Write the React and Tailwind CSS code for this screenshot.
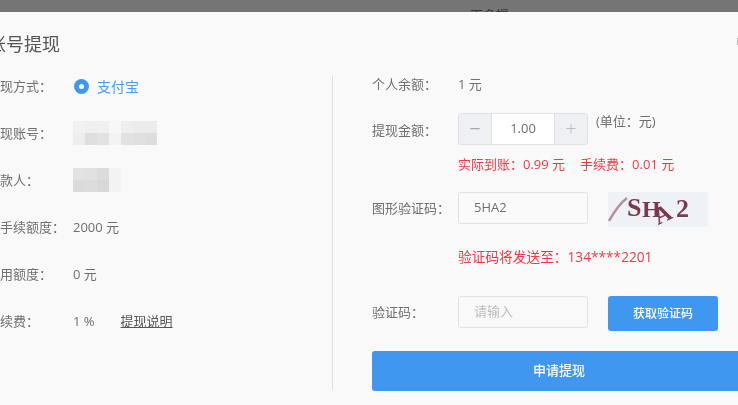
import React from 'react';

const leftRows = [
  { label: '提现方式：', kind: 'radio' },
  { label: '提现账号：', kind: 'mosaicA' },
  { label: '收款人：', kind: 'mosaicB' },
  { label: '免手续额度：', value: '2000 元', indent: true },
  { label: '可用额度：', value: '0 元' },
  { label: '手续费：', value: '1 %', link: '提现说明' },
];

const mosaicA = [
  ['bg-[#f1f1f1]', 'bg-[#efefef]', 'bg-[#f0f0f0]', 'bg-[#f7f7f7]', 'bg-[#eeeeee]', 'bg-[#ececec]', 'bg-[#ebebeb]'],
  ['bg-[#eeeeee]', 'bg-[#dedede]', 'bg-[#e2e2e2]', 'bg-[#f3f3f3]', 'bg-[#e2e2e2]', 'bg-[#e0e0e0]', 'bg-[#dddddd]'],
];

const mosaicB = [
  ['bg-[#e2e2e2]', 'bg-[#e1e1e1]', 'bg-[#dcdcdc]', 'bg-[#f3f3f3]'],
  ['bg-[#dbdbdb]', 'bg-[#dcdcdc]', 'bg-[#d8d8d8]', 'bg-[#f3f3f3]'],
];

function Mosaic({ rows }) {
  return (
    <div className="flex flex-col -mt-0.5">
      {rows.map((row, i) => (
        <div key={i} className="flex">
          {row.map((c, j) => (
            <div key={j} className={`w-3 h-3 ${c}`}></div>
          ))}
        </div>
      ))}
    </div>
  );
}

function LeftRow({ row }) {
  return (
    <div className="flex items-center h-[47px]">
      <div className="w-[86px] shrink-0 whitespace-nowrap">{row.label}</div>
      {row.kind === 'radio' && (
        <div className="flex items-center gap-2 ml-px text-[14px] text-[#4a9cf0]">
          <span className="w-[15px] h-[15px] rounded-full bg-[#3f97f0] flex items-center justify-center">
            <span className="w-[5px] h-[5px] rounded-full bg-white"></span>
          </span>
          支付宝
        </div>
      )}
      {row.kind === 'mosaicA' && <Mosaic rows={mosaicA} />}
      {row.kind === 'mosaicB' && <Mosaic rows={mosaicB} />}
      {row.value && <span>{row.value}</span>}
      {row.link && <a className="ml-[26px] underline text-[#555]">{row.link}</a>}
    </div>
  );
}

function Captcha() {
  return (
    <div className="ml-5 w-[100px] h-[35px] bg-[#eef2f6]">
      <svg width="100" height="35" viewBox="0 0 100 35">
        <path d="M1 29 C6 20 11 12 19 6" stroke="#b58f9c" strokeWidth="2.5" fill="none" />
        <g fill="#7a3a4e" fontFamily="'Liberation Serif', serif" fontWeight="700" fontSize="26">
          <text x="19" y="24">S</text>
          <text x="34" y="25" fontSize="24">H</text>
          <text transform="translate(50 33) rotate(-25)" fontSize="24">A</text>
          <text x="68" y="25" fontSize="26">2</text>
        </g>
      </svg>
    </div>
  );
}

export default function App() {
  return (
    <div className="w-[738px] h-[405px] overflow-hidden flex flex-col bg-[#f9f9f9] text-[13px] text-[#6f6f6f] font-['Open_Sans','Noto_Sans_CJK_SC',sans-serif] blur-[0.35px]">
      {/* dimmed page behind the dialog */}
      <div className="h-3 shrink-0 bg-[#757575] overflow-hidden relative">
        <span className="absolute left-[470px] top-[7px] text-[13px] text-[#333] leading-4 whitespace-nowrap">更多提</span>
      </div>

      <div className="relative flex-1 flex flex-col">
        <span className="absolute right-0 top-[26px] w-px h-[7px] bg-[#bbb]"></span>

        <h1 className="-ml-3 mt-[22px] h-5 leading-5 text-lg font-normal text-[#555] whitespace-nowrap">账号提现</h1>

        <div className="flex mt-[22px]">
          {/* left column */}
          <div className="w-[346px] -ml-[13px] shrink-0 border-r border-[#dedede] h-[314px] box-border">
            <div className="-mt-[13px]">
              {leftRows.map((row) => (
                <LeftRow key={row.label} row={row} />
              ))}
            </div>
          </div>

          {/* right column */}
          <div className="flex-1 pl-[39px] -mr-10">
            <div className="flex items-center h-[19px] -mt-px">
              <span className="w-[86px] shrink-0">个人余额：</span>
              <span>1 元</span>
            </div>

            <div className="flex mt-[19px] h-8">
              <span className="w-[86px] shrink-0 leading-8 mt-px">提现金额：</span>
              <div className="w-[130px] h-8 flex border border-[#dfe2e6] rounded-[3px] overflow-hidden">
                <span className="w-[33px] bg-[#eef0f3] border-r border-[#dfe2e6] flex items-center justify-center text-xl text-[#888] font-light">−</span>
                <span className="flex-1 bg-white flex items-center justify-center">1.00</span>
                <span className="w-[33px] bg-[#eef0f3] border-l border-[#dfe2e6] flex items-center justify-center text-xl text-[#bbb] font-light">+</span>
              </div>
              <span className="ml-2 leading-4">(单位：元)</span>
            </div>

            <div className="ml-[86px] mt-[10px] h-[18px] leading-[18px] text-[#ef3a46] whitespace-nowrap">
              实际到账：0.99 元<span className="ml-[15px]">手续费：0.01 元</span>
            </div>

            <div className="flex mt-[19px] h-[35px]">
              <span className="w-[86px] shrink-0 leading-8">图形验证码：</span>
              <div className="w-[130px] h-8 border border-[#dfe2e6] rounded-[3px] pl-[15px] leading-[28px] bg-[#fafafa]">5HA2</div>
              <Captcha />
            </div>

            <div className="ml-[86px] mt-[21px] h-[18px] leading-[18px] text-[13.7px] text-[#ef3a46] whitespace-nowrap">验证码将发送至：134****2201</div>

            <div className="flex mt-[30px] h-[35px]">
              <span className="w-[86px] shrink-0 leading-8">验证码：</span>
              <div className="w-[130px] h-8 border border-[#dfe2e6] rounded-[3px] pl-[15px] leading-[28px] text-[#bcbcbc]">请输入</div>
              <button className="ml-5 w-[110px] h-[35px] rounded-[3px] bg-[#3f97f0] text-white text-[12px] font-medium">获取验证码</button>
            </div>

            <button className="mt-5 w-[374px] h-10 rounded-[3px] bg-[#3f97f0] text-white text-[13px] font-medium block">申请提现</button>
          </div>
        </div>
      </div>
    </div>
  );
}
